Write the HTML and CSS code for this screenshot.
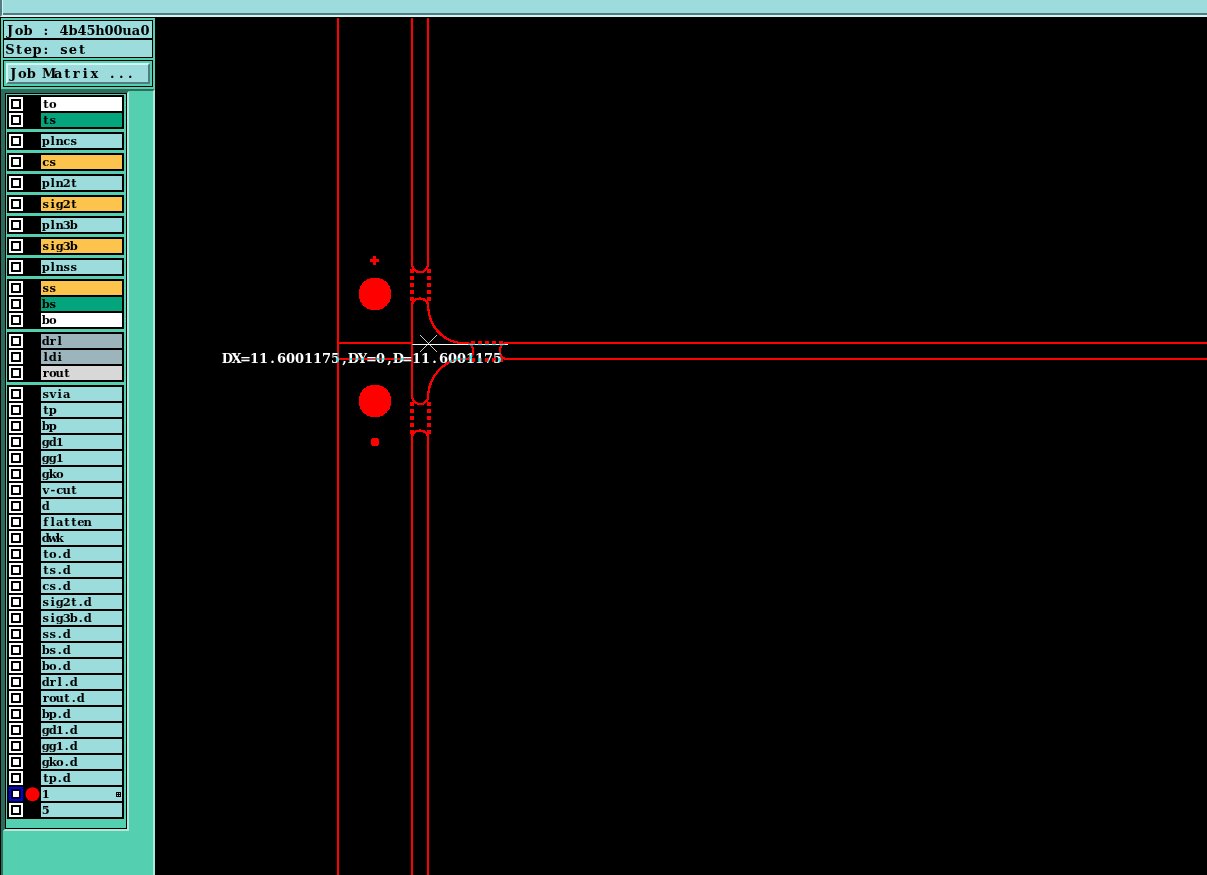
FILE: index.html
```
<!DOCTYPE html>
<html lang="en">
<head>
<meta charset="utf-8">
<title>Job 4b45h00ua0</title>
<link rel="stylesheet" href="styles.css">
</head>
<body>
<div class="app">
  <header class="topbar"></header>
  <div class="main">
    <aside class="sidebar">
      <section class="head">
        <div class="field" data-cell="9" data-base="13.5" data-left="1.5">Job : 4b45h00ua0</div>
        <div class="field" data-cell="9" data-base="13.5" data-left="1.5">Step: set</div>
        <div class="matrix"><button class="matrix-btn" data-cell="9" data-base="13" data-left="0.8">Job Matrix ...</button></div>
      </section>
      <section class="body">
        <div class="list" id="list"></div>
      </section>
    </aside>
    <main class="canvas">
      <svg class="drawing" width="1052" height="858" viewBox="155 17 1052 858">
        <g class="trace">
          <path d="M338 18V875M339 343H412M339 359H412"/>
          <path d="M412 18V264Q412.500 269 416 271L418 272H423L425 270Q428 268 428 264V18"/>
          <path d="M412 306Q412 299 420 298.500Q428 299 428 306C429 327 443 341 460 343H467Q473 344 473 351Q473 358 467 359H460C443 361 429 377 428 396Q428 401 425 402L423 404H418L415 402Q412 400 412 396Z"/>
          <path d="M412 875V438Q412 431 420 430.500Q428 431 428 438V875"/>
          <path d="M1207 343H506Q500 344 500 351Q500 358 506 359H1207"/>
        </g>
        <g class="dashes">
          <path d="M412 269V301M429 269V301M412 402V434M429 402V434M471 343H503M471 360H503"/>
        </g>
        <g class="pads">
          <circle cx="375" cy="294" r="16.400"/>
          <circle cx="375" cy="401" r="16.400"/>
          <path d="M373 256h3v3h3v3h-3v3h-3v-3h-3v-3h3z"/>
          <rect x="371" y="438" width="8" height="8" rx="2.500"/>
        </g>
        <g class="cursor">
          <path d="M412 344.500H508"/>
          <path class="thin" d="M420 335L437 352M437 335L420 352"/>
          <text class="mono large" y="363" data-x="223" data-cell="9">DX=11.6001175,DY=0,D=11.6001175</text>
        </g>
      </svg>
    </main>
  </div>
</div>
<script src="app.js"></script>
</body>
</html>
```
FILE: styles.css
```
* { box-sizing: border-box; }
body { margin: 0; background: #000; overflow: hidden; }
svg { display: block; }
.app { width: 1207px; height: 875px; display: flex; flex-direction: column; }
.topbar {
  height: 17px;
  flex: none;
  background: #9cdcdc;
  border-left: 2px solid #547c80;
  border-bottom: 2px solid #d4f4f4;
  box-shadow: inset 1px 0 #d4f4f4, inset 0 -2px #547c80;
}
.main { flex: 1; display: flex; min-height: 0; }
.sidebar {
  width: 155px;
  flex: none;
  display: flex;
  flex-direction: column;
  background: #54d0b0;
  border-left: 1px solid #000;
  border-top: 1px solid #000;
}
.head { height: 71px; flex: none; padding: 2px 2px 0; }
.field { height: 19px; border: 1px solid #000; background: #9cdcdc; }
.matrix { height: 27px; margin-top: 2px; padding: 2px; border: 1px solid #000; }
.matrix-btn {
  display: block;
  width: 144px;
  height: 21px;
  padding: 0;
  background: #9cdcdc;
  border: 2px solid;
  border-color: #d4f4f4 #547c80 #547c80 #d4f4f4;
}
.body {
  flex: 1;
  border-top: 2px solid #2c6c5c;
  border-left: 2px solid #2c6c5c;
  border-right: 2px solid #a8ecd8;
}
.list {
  width: 126px;
  height: 740px;
  padding: 2px 1px;
  display: flex;
  flex-direction: column;
  gap: 3px;
  border: 2px solid;
  border-color: #2c6c5c #b4e8dc #b4e8dc #2c6c5c;
  box-shadow: inset 0 0 0 1px #000;
}
.group {
  width: 117px;
  margin-left: 1px;
  padding: 2px;
  background: #000;
  display: flex;
  flex-direction: column;
  gap: 2px;
}
.row { display: flex; height: 14px; }
.check {
  width: 14px;
  height: 14px;
  background: #fff;
  border: 2px solid #fff;
  box-shadow: inset 0 0 0 2px #000;
}
.check.active { border-color: #0000f4; }
.state { width: 18px; height: 14px; }
.state circle { fill: #f00; }
.label { width: 81px; height: 14px; background: #9cdcdc; display: flex; }
.white { background: #fff; }
.green { background: #04a47c; }
.orange { background: #fcc44c; }
.slate { background: #9cb4bc; }
.gray { background: #d8d8d8; }
.mono {
  font-family: "DejaVu Serif", serif;
  font-weight: bold;
  font-size: 11.5px;
  text-anchor: middle;
}
.large { font-size: 13px; }
.grid { fill: #000; }
.canvas { flex: 1; background: #000; }
.trace { fill: none; stroke: #f00; stroke-width: 2.3; shape-rendering: crispEdges; }
.dashes { fill: none; stroke: #f00; stroke-width: 4; stroke-dasharray: 4 3; shape-rendering: crispEdges; }
.pads { fill: #f00; shape-rendering: crispEdges; }
.cursor { mix-blend-mode: difference; }
.cursor path { stroke: #fff; stroke-width: 1; fill: none; shape-rendering: crispEdges; }
.cursor .thin { stroke-width: 0.8; }
.cursor text { fill: #fff; }
```
FILE: app.js
```
const NS = "http://www.w3.org/2000/svg";

// Centres each character in a fixed-width cell, as on a terminal.
function setCells(node, left, cell) {
  node.setAttribute("x", [...node.textContent].map((c, i) => left + cell * (i + 0.5)).join(" "));
}

function cellText(text, left, base, cell, width, height) {
  const svg = document.createElementNS(NS, "svg");
  svg.setAttribute("width", width);
  svg.setAttribute("height", height);
  const node = document.createElementNS(NS, "text");
  node.setAttribute("class", cell > 8 ? "mono large" : "mono");
  node.setAttribute("y", base);
  node.textContent = text;
  setCells(node, left, cell);
  svg.append(node);
  return svg;
}

const groups = [
  ["to:white", "ts:green"],
  ["plncs"], ["cs:orange"], ["pln2t"], ["sig2t:orange"], ["pln3b"], ["sig3b:orange"], ["plnss"],
  ["ss:orange", "bs:green", "bo:white"],
  ["drl:slate", "ldi:slate", "rout:gray"],
  ["svia", "tp", "bp", "gd1", "gg1", "gko", "v-cut", "d", "flatten", "dwk",
   "to.d", "ts.d", "cs.d", "sig2t.d", "sig3b.d", "ss.d", "bs.d", "bo.d", "drl.d", "rout.d",
   "bp.d", "gd1.d", "gg1.d", "gko.d", "tp.d", "1", "5"]
];

const list = document.getElementById("list");
for (const names of groups) {
  const group = document.createElement("div");
  group.className = "group";
  for (const entry of names) {
    const [name, color = ""] = entry.split(":");
    const active = name === "1";
    const row = document.createElement("div");
    row.className = "row";
    row.innerHTML = `<span class="check ${active ? "active" : ""}"></span>
      <svg class="state" width="18" height="14" overflow="visible">${active ? '<circle cx="9.5" cy="7.3" r="7"/>' : ""}</svg>
      <span class="label ${color}"></span>`;
    const svg = cellText(name, 1.3, 11, 7, 81, 14);
    if (active) {
      svg.insertAdjacentHTML("beforeend", '<path class="grid" fill-rule="evenodd" d="M75 5h5v5h-5zM76 6v1h1v-1zM78 6v1h1v-1zM76 8v1h1v-1zM78 8v1h1v-1z"/>');
    }
    row.querySelector(".label").append(svg);
    group.append(row);
  }
  list.append(group);
}

document.querySelectorAll(".field, .matrix-btn").forEach(el => {
  const text = el.textContent;
  el.textContent = "";
  el.append(cellText(text, +el.dataset.left, +el.dataset.base, +el.dataset.cell, el.clientWidth, el.clientHeight));
});

const readout = document.querySelector(".cursor text");
setCells(readout, +readout.dataset.x, +readout.dataset.cell);
```
